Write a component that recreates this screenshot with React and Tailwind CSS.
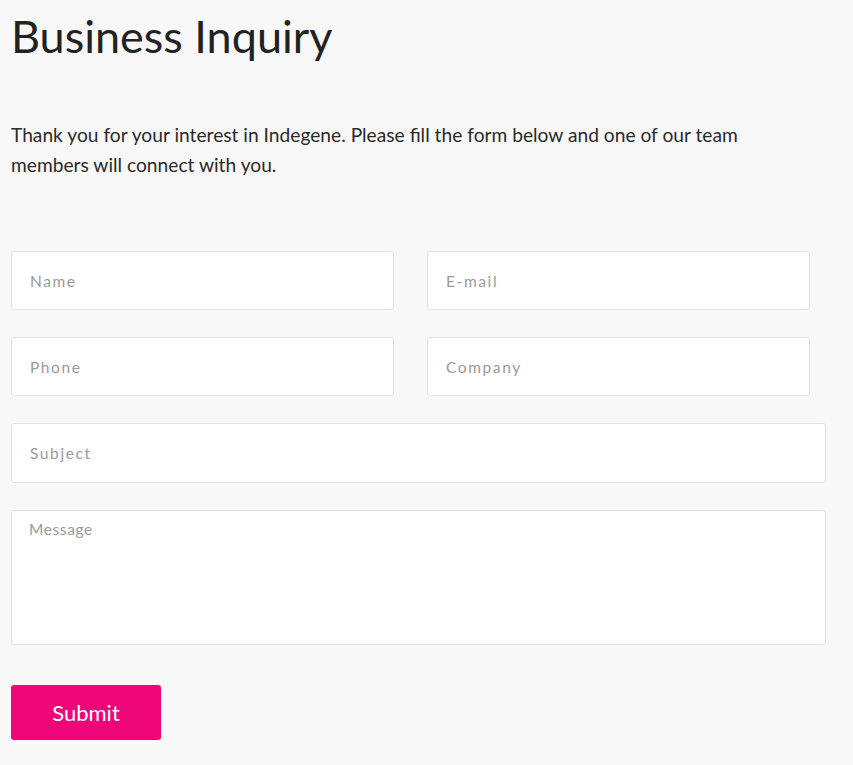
export default function App() {
  const font = { fontFamily: 'Lato, "Noto Sans", sans-serif' }
  const inputCls =
    'rounded-[3px] border border-[#e2e2e2] bg-white px-[18px] text-[15.5px] tracking-[1.6px] text-[#333] placeholder:text-[#9a9a9a] outline-none'

  return (
    <div className="min-h-[765px] bg-[#f8f8f8] px-[11px] pt-[7px]" style={font}>
      <h1 className="text-[45px] leading-[58px] text-[#222]">Business Inquiry</h1>

      <p className="mt-[55px] w-[745px] text-[19.2px] leading-[30px] text-[#2a2a2a]">
        Thank you for your interest in Indegene. Please fill the form below and one of our team members will
        connect with you.
      </p>

      <form className="mt-[71px] flex w-[815px] flex-col gap-[27px]" onSubmit={(e) => e.preventDefault()}>
        <div className="flex gap-[33px]">
          <input placeholder="Name" className={`h-[59px] w-[383px] ${inputCls}`} />
          <input placeholder="E-mail" className={`h-[59px] w-[383px] ${inputCls}`} />
        </div>
        <div className="flex gap-[33px]">
          <input placeholder="Phone" className={`h-[59px] w-[383px] ${inputCls}`} />
          <input placeholder="Company" className={`h-[59px] w-[383px] ${inputCls}`} />
        </div>
        <input placeholder="Subject" className={`h-[60px] w-full ${inputCls}`} />
        <textarea
          placeholder="Message"
          className="h-[135px] w-full resize-none rounded-[3px] border border-[#e2e2e2] bg-white px-[17px] py-[7px] text-[15.5px] tracking-[0.6px] text-[#333] placeholder:text-[#9a9a9a] outline-none"
        />
        <div className="pt-[13px]">
          <button
            type="submit"
            className="h-[55px] w-[150px] rounded-[3px] bg-[#ee0679] text-[22px] text-white"
          >
            Submit
          </button>
        </div>
      </form>
    </div>
  )
}
